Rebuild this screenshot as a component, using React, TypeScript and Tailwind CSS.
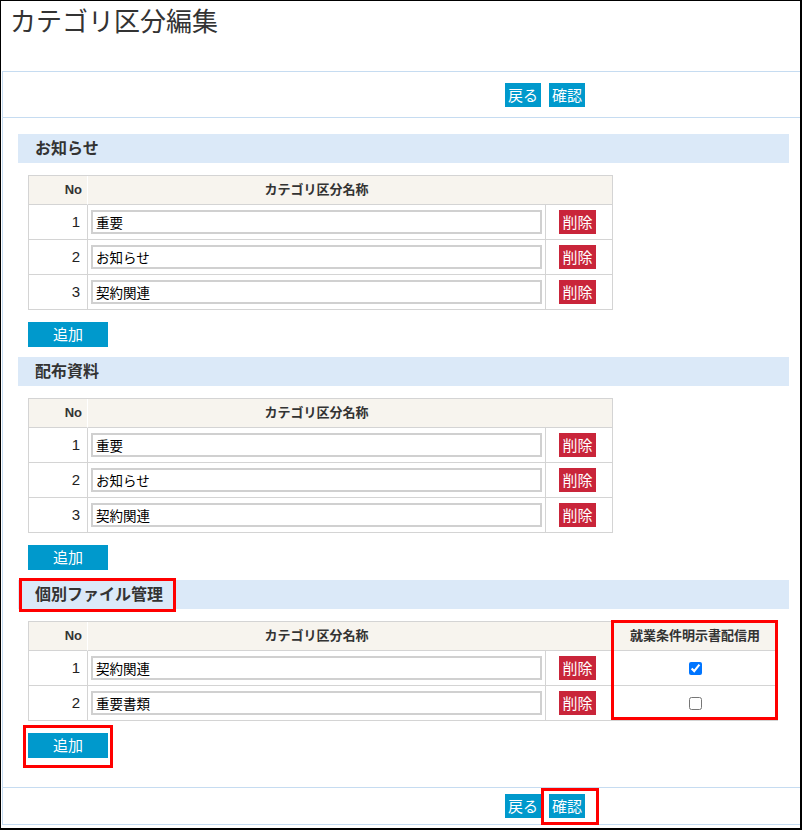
import React from "react";

type Row = { no: number; name: string; checked?: boolean };

type Section = {
  title: string;
  rows: Row[];
  withDelivery?: boolean;
};

const sections: Section[] = [
  {
    title: "お知らせ",
    rows: [
      { no: 1, name: "重要" },
      { no: 2, name: "お知らせ" },
      { no: 3, name: "契約関連" },
    ],
  },
  {
    title: "配布資料",
    rows: [
      { no: 1, name: "重要" },
      { no: 2, name: "お知らせ" },
      { no: 3, name: "契約関連" },
    ],
  },
  {
    title: "個別ファイル管理",
    withDelivery: true,
    rows: [
      { no: 1, name: "契約関連", checked: true },
      { no: 2, name: "重要書類", checked: false },
    ],
  },
];

const RedBox = ({ className }: { className: string }) => (
  <div className={`pointer-events-none absolute border-[3px] border-[#ff0000] ${className}`} />
);

const BlueButton = ({ label }: { label: string }) => (
  <button className="flex h-[24px] items-center justify-center bg-[#0099cc] px-[3px] text-[15px] leading-none text-white">
    {label}
  </button>
);

const Toolbar = ({ highlight }: { highlight?: boolean }) => (
  <div className="ml-[502px] flex gap-[8px]">
    <BlueButton label="戻る" />
    <div className="relative">
      <BlueButton label="確認" />
      {highlight && <RedBox className="left-[-8px] top-[-6px] h-[37px] w-[58px]" />}
    </div>
  </div>
);

const CategoryTable = ({ section }: { section: Section }) => {
  const cols = section.withDelivery
    ? "grid-cols-[59px_458px_67px_165px]"
    : "grid-cols-[59px_458px_67px]";

  return (
    <div className="relative ml-[10px] mt-[12px] w-fit">
      <div className={`grid ${cols} border-l border-t border-[#d4d4d4]`}>
        <div className="flex h-[29px] items-center justify-end border-b border-r border-b-[#d4d4d4] border-r-white bg-[#f7f4ee] pr-[5px] text-[13px] font-bold text-[#333]">
          No
        </div>
        <div className="flex h-[29px] items-center justify-center border-b border-b-[#d4d4d4] bg-[#f7f4ee] pr-[1px] text-[13px] font-bold text-[#333]">
          カテゴリ区分名称
        </div>
        <div className="h-[29px] border-b border-r border-[#d4d4d4] bg-[#f7f4ee]" />
        {section.withDelivery && (
          <div className="flex h-[29px] items-center justify-center border-b border-r border-[#d4d4d4] bg-[#f7f4ee] text-[13px] font-semibold text-[#333]">
            就業条件明示書配信用
          </div>
        )}

        {section.rows.map((row) => (
          <React.Fragment key={row.no}>
            <div className="flex h-[35px] items-center justify-end border-b border-r border-[#d4d4d4] pr-[7px] text-[15px] text-[#222]">
              {row.no}
            </div>
            <div className="flex h-[35px] items-center border-b border-r border-[#d4d4d4] px-[3px]">
              <input
                defaultValue={row.name}
                className="h-[24px] w-[451px] border-2 border-[#d0d0d0] px-[3px] text-[13.5px] text-black outline-none"
              />
            </div>
            <div className="flex h-[35px] items-center border-b border-r border-[#d4d4d4] pl-[13px]">
              <button className="flex h-[24px] w-[37px] items-center justify-center bg-[#c9253a] text-[15px] leading-none text-white">
                削除
              </button>
            </div>
            {section.withDelivery && (
              <div className="flex h-[35px] items-center justify-center border-b border-r border-[#d4d4d4]">
                <input type="checkbox" defaultChecked={row.checked} className="m-0 h-[13px] w-[13px]" />
              </div>
            )}
          </React.Fragment>
        ))}
      </div>
      {section.withDelivery && <RedBox className="left-[583px] top-[-1px] h-[100px] w-[167px]" />}
    </div>
  );
};

const SectionBlock = ({ section, first }: { section: Section; first: boolean }) => (
  <div className={first ? "" : "mt-[10px]"}>
    <div className="relative flex h-[29px] items-center bg-[#dbe9f8] pl-[17px] text-[16px] font-bold text-[#333]">
      {section.title}
      {section.withDelivery && <RedBox className="left-[1px] top-[-2px] h-[34px] w-[157px]" />}
    </div>
    <CategoryTable section={section} />
    <div className="relative ml-[10px] mt-[12px] w-fit">
      <button className="flex h-[25px] w-[80px] items-center justify-center bg-[#0099cc] text-[15px] leading-none text-white">
        追加
      </button>
      {section.withDelivery && <RedBox className="left-[-5px] top-[-8px] h-[43px] w-[90px]" />}
    </div>
  </div>
);

const App = () => {
  return (
    <div className="box-border h-[830px] w-[802px] border-b-2 border-l border-r-2 border-t border-black bg-white font-['Liberation_Sans','Noto_Sans_CJK_JP',sans-serif]">
      <div className="h-[70px] pl-[9px] pt-[5px]">
        <h1 className="text-[26px] font-normal leading-[32px] text-[#333]">カテゴリ区分編集</h1>
      </div>

      <div className="ml-[1px] border-b border-l border-t border-[#c6dcf1]">
        <div className="h-[46px] border-b border-[#c6dcf1] pt-[11px]">
          <Toolbar />
        </div>

        <div className="pb-[29px] pl-[15px] pr-[11px] pt-[16px]">
          {sections.map((s, i) => (
            <SectionBlock key={s.title} section={s} first={i === 0} />
          ))}
        </div>

        <div className="h-[37px] border-t border-[#c6dcf1] pt-[6px]">
          <Toolbar highlight />
        </div>
      </div>
    </div>
  );
};

export default App;
